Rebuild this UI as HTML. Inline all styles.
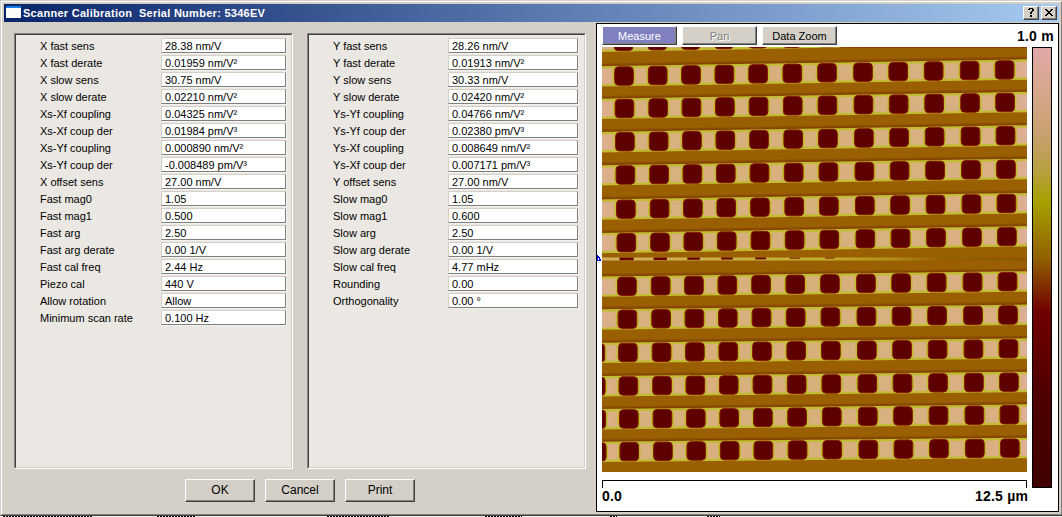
<!DOCTYPE html>
<html><head><meta charset="utf-8"><style>
*{box-sizing:border-box}
html,body{margin:0;padding:0;width:1062px;height:517px;overflow:hidden;background:#fff;font-family:"Liberation Sans",sans-serif;font-size:11px;color:#000}
.abs{position:absolute}
#win{position:absolute;left:0;top:0;width:1063px;height:516px;background:#D4D0C8;border-top:1px solid #D4D0C8;border-left:1px solid #D4D0C8;border-right:1px solid #404040;border-bottom:1px solid #404040}
#win2{position:absolute;left:1px;top:1px;width:1061px;height:514px;border-top:1px solid #fff;border-left:1px solid #fff;border-right:1px solid #808080;border-bottom:1px solid #808080}
#title{position:absolute;left:4px;top:4px;width:1055px;height:18px;background:linear-gradient(to right,#0A246A,#A6CAF0)}
#ttext{position:absolute;left:23px;top:7px;color:#fff;font-weight:bold;font-size:11px;letter-spacing:0.28px;white-space:nowrap;line-height:13px}
.cap{position:absolute;top:6px;width:16px;height:14px;background:#D4D0C8;border-top:1px solid #fff;border-left:1px solid #fff;border-right:1px solid #404040;border-bottom:1px solid #404040;box-shadow:inset -1px -1px 0 #808080}
.grp{position:absolute;top:33px;width:279px;height:436px;background:#EBE8E3;border-top:1px solid #808080;border-left:1px solid #808080;border-right:1px solid #fff;border-bottom:1px solid #fff}
.grp>div{position:absolute;left:0;top:0;right:0;bottom:0;border-top:1px solid #404040;border-left:1px solid #404040;border-right:1px solid #D4D0C8;border-bottom:1px solid #D4D0C8}
.lb{position:absolute;white-space:nowrap;line-height:15px;height:15px}
.ed{position:absolute;height:15px;background:#fff;border-top:1px solid #D4D0C8;border-left:1px solid #D4D0C8;border-right:1px solid #808080;border-bottom:1px solid #808080;padding-left:3px;line-height:15px;white-space:nowrap;box-shadow:1px 1px 0 #F4F2EE}
.btn{position:absolute;height:23px;width:70px;background:#D4D0C8;border-top:1px solid #fff;border-left:1px solid #fff;border-right:1px solid #404040;border-bottom:1px solid #404040;box-shadow:inset -1px -1px 0 #808080;text-align:center;line-height:20px;font-size:12px}
#panel{position:absolute;left:596px;top:23px;width:463px;height:489px;background:#fff;border:1px solid #000}
.tb{position:absolute;top:26px;width:75px;height:19px;background:#D4D0C8;border-top:1px solid #fff;border-left:1px solid #fff;border-right:1px solid #404040;border-bottom:1px solid #404040;box-shadow:inset -1px -1px 0 #808080;text-align:center;line-height:18px}
.sc{position:absolute;font-weight:bold;font-size:14px;letter-spacing:0.2px;line-height:16px;white-space:nowrap}

</style></head><body>
<div class="abs" style="left:0;top:516px;width:1062px;height:1px;background:#F4F2EE"></div><div class="abs" style="left:3px;top:516px;width:89px;height:1px;background:repeating-linear-gradient(to right,#000 0 2px,#fff 2px 3px)"></div><div class="abs" style="left:157px;top:516px;width:39px;height:1px;background:repeating-linear-gradient(to right,#000 0 2px,#fff 2px 3px)"></div><div class="abs" style="left:327px;top:516px;width:63px;height:1px;background:repeating-linear-gradient(to right,#000 0 2px,#fff 2px 3px)"></div><div class="abs" style="left:485px;top:516px;width:37px;height:1px;background:repeating-linear-gradient(to right,#000 0 2px,#fff 2px 3px)"></div><div class="abs" style="left:610px;top:516px;width:7px;height:1px;background:repeating-linear-gradient(to right,#000 0 2px,#fff 2px 3px)"></div><div class="abs" style="left:707px;top:516px;width:13px;height:1px;background:repeating-linear-gradient(to right,#000 0 2px,#fff 2px 3px)"></div>
<div id="win"></div><div id="win2"></div>
<div id="title"></div>
<div id="ticon" class="abs" style="left:6px;top:6px;width:15px;height:12px;background:#FDFDF8;border-top:2px solid #1A7CE6"></div>
<div id="ttext">Scanner Calibration&nbsp; Serial Number: 5346EV</div>
<div class="cap" style="left:1023px"></div>
<div class="cap" style="left:1041px"></div>
<svg class="abs" style="left:0;top:0" width="1062" height="22" viewBox="0 0 1062 22" shape-rendering="crispEdges" fill="#000"><rect x="1029" y="8" width="4" height="1"/><rect x="1028" y="9" width="2" height="1"/><rect x="1032" y="9" width="2" height="1"/><rect x="1032" y="10" width="2" height="1"/><rect x="1031" y="11" width="2" height="1"/><rect x="1030" y="12" width="2" height="1"/><rect x="1030" y="13" width="2" height="1"/><rect x="1030" y="15" width="2" height="1"/><rect x="1030" y="16" width="2" height="1"/><rect x="1045" y="9" width="1" height="1"/><rect x="1046" y="9" width="1" height="1"/><rect x="1051" y="9" width="1" height="1"/><rect x="1052" y="9" width="1" height="1"/><rect x="1046" y="10" width="1" height="1"/><rect x="1047" y="10" width="1" height="1"/><rect x="1050" y="10" width="1" height="1"/><rect x="1051" y="10" width="1" height="1"/><rect x="1047" y="11" width="1" height="1"/><rect x="1048" y="11" width="1" height="1"/><rect x="1049" y="11" width="1" height="1"/><rect x="1050" y="11" width="1" height="1"/><rect x="1048" y="12" width="1" height="1"/><rect x="1049" y="12" width="1" height="1"/><rect x="1047" y="13" width="1" height="1"/><rect x="1048" y="13" width="1" height="1"/><rect x="1049" y="13" width="1" height="1"/><rect x="1050" y="13" width="1" height="1"/><rect x="1046" y="14" width="1" height="1"/><rect x="1047" y="14" width="1" height="1"/><rect x="1050" y="14" width="1" height="1"/><rect x="1051" y="14" width="1" height="1"/><rect x="1045" y="15" width="1" height="1"/><rect x="1046" y="15" width="1" height="1"/><rect x="1051" y="15" width="1" height="1"/><rect x="1052" y="15" width="1" height="1"/></svg>
<div class="grp" style="left:14px"><div></div></div>
<div class="grp" style="left:307px"><div></div></div>
<div class="lb" style="left:40px;top:39px">X fast sens</div><div class="ed" style="left:161px;top:38px;width:125px">28.38 nm/V</div>
<div class="lb" style="left:40px;top:56px">X fast derate</div><div class="ed" style="left:161px;top:55px;width:125px">0.01959 nm/V²</div>
<div class="lb" style="left:40px;top:73px">X slow sens</div><div class="ed" style="left:161px;top:72px;width:125px">30.75 nm/V</div>
<div class="lb" style="left:40px;top:90px">X slow derate</div><div class="ed" style="left:161px;top:89px;width:125px">0.02210 nm/V²</div>
<div class="lb" style="left:40px;top:107px">Xs-Xf coupling</div><div class="ed" style="left:161px;top:106px;width:125px">0.04325 nm/V²</div>
<div class="lb" style="left:40px;top:124px">Xs-Xf coup der</div><div class="ed" style="left:161px;top:123px;width:125px">0.01984 pm/V³</div>
<div class="lb" style="left:40px;top:141px">Xs-Yf coupling</div><div class="ed" style="left:161px;top:140px;width:125px">0.000890 nm/V²</div>
<div class="lb" style="left:40px;top:158px">Xs-Yf coup der</div><div class="ed" style="left:161px;top:157px;width:125px">-0.008489 pm/V³</div>
<div class="lb" style="left:40px;top:175px">X offset sens</div><div class="ed" style="left:161px;top:174px;width:125px">27.00 nm/V</div>
<div class="lb" style="left:40px;top:192px">Fast mag0</div><div class="ed" style="left:161px;top:191px;width:125px">1.05</div>
<div class="lb" style="left:40px;top:209px">Fast mag1</div><div class="ed" style="left:161px;top:208px;width:125px">0.500</div>
<div class="lb" style="left:40px;top:226px">Fast arg</div><div class="ed" style="left:161px;top:225px;width:125px">2.50</div>
<div class="lb" style="left:40px;top:243px">Fast arg derate</div><div class="ed" style="left:161px;top:242px;width:125px">0.00 1/V</div>
<div class="lb" style="left:40px;top:260px">Fast cal freq</div><div class="ed" style="left:161px;top:259px;width:125px">2.44 Hz</div>
<div class="lb" style="left:40px;top:277px">Piezo cal</div><div class="ed" style="left:161px;top:276px;width:125px">440 V</div>
<div class="lb" style="left:40px;top:294px">Allow rotation</div><div class="ed" style="left:161px;top:293px;width:125px">Allow</div>
<div class="lb" style="left:40px;top:311px">Minimum scan rate</div><div class="ed" style="left:161px;top:310px;width:125px">0.100 Hz</div>
<div class="lb" style="left:333px;top:39px">Y fast sens</div><div class="ed" style="left:448px;top:38px;width:130px">28.26 nm/V</div>
<div class="lb" style="left:333px;top:56px">Y fast derate</div><div class="ed" style="left:448px;top:55px;width:130px">0.01913 nm/V²</div>
<div class="lb" style="left:333px;top:73px">Y slow sens</div><div class="ed" style="left:448px;top:72px;width:130px">30.33 nm/V</div>
<div class="lb" style="left:333px;top:90px">Y slow derate</div><div class="ed" style="left:448px;top:89px;width:130px">0.02420 nm/V²</div>
<div class="lb" style="left:333px;top:107px">Ys-Yf coupling</div><div class="ed" style="left:448px;top:106px;width:130px">0.04766 nm/V²</div>
<div class="lb" style="left:333px;top:124px">Ys-Yf coup der</div><div class="ed" style="left:448px;top:123px;width:130px">0.02380 pm/V³</div>
<div class="lb" style="left:333px;top:141px">Ys-Xf coupling</div><div class="ed" style="left:448px;top:140px;width:130px">0.008649 nm/V²</div>
<div class="lb" style="left:333px;top:158px">Ys-Xf coup der</div><div class="ed" style="left:448px;top:157px;width:130px">0.007171 pm/V³</div>
<div class="lb" style="left:333px;top:175px">Y offset sens</div><div class="ed" style="left:448px;top:174px;width:130px">27.00 nm/V</div>
<div class="lb" style="left:333px;top:192px">Slow mag0</div><div class="ed" style="left:448px;top:191px;width:130px">1.05</div>
<div class="lb" style="left:333px;top:209px">Slow mag1</div><div class="ed" style="left:448px;top:208px;width:130px">0.600</div>
<div class="lb" style="left:333px;top:226px">Slow arg</div><div class="ed" style="left:448px;top:225px;width:130px">2.50</div>
<div class="lb" style="left:333px;top:243px">Slow arg derate</div><div class="ed" style="left:448px;top:242px;width:130px">0.00 1/V</div>
<div class="lb" style="left:333px;top:260px">Slow cal freq</div><div class="ed" style="left:448px;top:259px;width:130px">4.77 mHz</div>
<div class="lb" style="left:333px;top:277px">Rounding</div><div class="ed" style="left:448px;top:276px;width:130px">0.00</div>
<div class="lb" style="left:333px;top:294px">Orthogonality</div><div class="ed" style="left:448px;top:293px;width:130px">0.00 °</div>
<div class="btn" style="left:185px;top:479px">OK</div>
<div class="btn" style="left:265px;top:479px">Cancel</div>
<div class="btn" style="left:345px;top:479px">Print</div>
<div id="panel"></div>
<div class="tb" style="left:602px;background:#8080C0;color:#fff">Measure</div>
<div class="tb" style="left:682px;color:#808080;text-shadow:1px 1px 0 #fff">Pan</div>
<div class="tb" style="left:762px">Data Zoom</div>
<svg width="425" height="425" viewBox="602 47 425 425" style="position:absolute;left:602px;top:47px;display:block">
<defs><linearGradient id="lg" x1="0" x2="1" y1="0" y2="0"><stop offset="0" stop-color="#E0AE9A"/><stop offset="0.04" stop-color="#D9B080"/><stop offset="0.5" stop-color="#D8B07C"/><stop offset="0.95" stop-color="#DAB084"/><stop offset="1" stop-color="#E0AE9C"/></linearGradient><filter id="bl" x="-5%" y="-5%" width="110%" height="110%"><feGaussianBlur stdDeviation="0.75"/></filter></defs>
<g filter="url(#bl)">
<rect x="597" y="42" width="435" height="435" fill="#9A5E00"/>
<polygon points="597,29.03 1032,20.77 1032,23.77 597,32.03" fill="#8E5000" />
<polygon points="597,30.23 1032,21.97 1032,23.77 597,32.03" fill="#844400" />
<polygon points="597,31.73 1032,23.47 1032,43.87 597,52.13" fill="#C2BC30" />
<polygon points="597,34.03 1032,25.77 1032,41.57 597,49.83" fill="url(#lg)" />
<rect x="612.22" y="32.73" width="22.6" height="17.4" rx="3.8" fill="#C0BC2C"/>
<rect x="614.22" y="32.23" width="18.6" height="18.4" rx="3.8" fill="#5C0000" stroke="#861400" stroke-width="1"/>
<rect x="645.92" y="32.09" width="22.6" height="17.4" rx="3.8" fill="#C0BC2C"/>
<rect x="647.92" y="31.59" width="18.6" height="18.4" rx="3.8" fill="#5C0000" stroke="#861400" stroke-width="1"/>
<rect x="679.22" y="31.46" width="22.6" height="17.4" rx="3.8" fill="#C0BC2C"/>
<rect x="681.22" y="30.96" width="18.6" height="18.4" rx="3.8" fill="#5C0000" stroke="#861400" stroke-width="1"/>
<rect x="712.62" y="30.82" width="22.6" height="17.4" rx="3.8" fill="#C0BC2C"/>
<rect x="714.62" y="30.32" width="18.6" height="18.4" rx="3.8" fill="#5C0000" stroke="#861400" stroke-width="1"/>
<rect x="746.32" y="30.18" width="22.6" height="17.4" rx="3.8" fill="#C0BC2C"/>
<rect x="748.32" y="29.68" width="18.6" height="18.4" rx="3.8" fill="#5C0000" stroke="#861400" stroke-width="1"/>
<rect x="780.52" y="29.53" width="22.6" height="17.4" rx="3.8" fill="#C0BC2C"/>
<rect x="782.52" y="29.03" width="18.6" height="18.4" rx="3.8" fill="#5C0000" stroke="#861400" stroke-width="1"/>
<rect x="815.22" y="28.87" width="22.6" height="17.4" rx="3.8" fill="#C0BC2C"/>
<rect x="817.22" y="28.37" width="18.6" height="18.4" rx="3.8" fill="#5C0000" stroke="#861400" stroke-width="1"/>
<rect x="851.22" y="28.19" width="22.6" height="17.4" rx="3.8" fill="#C0BC2C"/>
<rect x="853.22" y="27.69" width="18.6" height="18.4" rx="3.8" fill="#5C0000" stroke="#861400" stroke-width="1"/>
<rect x="886.42" y="27.52" width="22.6" height="17.4" rx="3.8" fill="#C0BC2C"/>
<rect x="888.42" y="27.02" width="18.6" height="18.4" rx="3.8" fill="#5C0000" stroke="#861400" stroke-width="1"/>
<rect x="921.92" y="26.84" width="22.6" height="17.4" rx="3.8" fill="#C0BC2C"/>
<rect x="923.92" y="26.34" width="18.6" height="18.4" rx="3.8" fill="#5C0000" stroke="#861400" stroke-width="1"/>
<rect x="957.82" y="26.16" width="22.6" height="17.4" rx="3.8" fill="#C0BC2C"/>
<rect x="959.82" y="25.66" width="18.6" height="18.4" rx="3.8" fill="#5C0000" stroke="#861400" stroke-width="1"/>
<rect x="992.82" y="25.50" width="22.6" height="17.4" rx="3.8" fill="#C0BC2C"/>
<rect x="994.82" y="25.00" width="18.6" height="18.4" rx="3.8" fill="#5C0000" stroke="#861400" stroke-width="1"/>
<rect x="1028.22" y="24.82" width="22.6" height="17.4" rx="3.8" fill="#C0BC2C"/>
<rect x="1030.22" y="24.32" width="18.6" height="18.4" rx="3.8" fill="#5C0000" stroke="#861400" stroke-width="1"/>
<polygon points="597,63.55 1032,56.59 1032,59.59 597,66.55" fill="#8E5000" />
<polygon points="597,64.75 1032,57.79 1032,59.59 597,66.55" fill="#844400" />
<polygon points="597,66.25 1032,59.29 1032,79.69 597,86.65" fill="#C2BC30" />
<polygon points="597,68.55 1032,61.59 1032,77.39 597,84.35" fill="url(#lg)" />
<rect x="612.70" y="67.32" width="22.6" height="17.4" rx="3.8" fill="#C0BC2C"/>
<rect x="614.70" y="66.82" width="18.6" height="18.4" rx="3.8" fill="#5C0000" stroke="#861400" stroke-width="1"/>
<rect x="646.40" y="66.78" width="22.6" height="17.4" rx="3.8" fill="#C0BC2C"/>
<rect x="648.40" y="66.28" width="18.6" height="18.4" rx="3.8" fill="#5C0000" stroke="#861400" stroke-width="1"/>
<rect x="679.70" y="66.24" width="22.6" height="17.4" rx="3.8" fill="#C0BC2C"/>
<rect x="681.70" y="65.74" width="18.6" height="18.4" rx="3.8" fill="#5C0000" stroke="#861400" stroke-width="1"/>
<rect x="713.10" y="65.71" width="22.6" height="17.4" rx="3.8" fill="#C0BC2C"/>
<rect x="715.10" y="65.21" width="18.6" height="18.4" rx="3.8" fill="#5C0000" stroke="#861400" stroke-width="1"/>
<rect x="746.80" y="65.17" width="22.6" height="17.4" rx="3.8" fill="#C0BC2C"/>
<rect x="748.80" y="64.67" width="18.6" height="18.4" rx="3.8" fill="#5C0000" stroke="#861400" stroke-width="1"/>
<rect x="781.00" y="64.62" width="22.6" height="17.4" rx="3.8" fill="#C0BC2C"/>
<rect x="783.00" y="64.12" width="18.6" height="18.4" rx="3.8" fill="#5C0000" stroke="#861400" stroke-width="1"/>
<rect x="815.70" y="64.07" width="22.6" height="17.4" rx="3.8" fill="#C0BC2C"/>
<rect x="817.70" y="63.57" width="18.6" height="18.4" rx="3.8" fill="#5C0000" stroke="#861400" stroke-width="1"/>
<rect x="851.70" y="63.49" width="22.6" height="17.4" rx="3.8" fill="#C0BC2C"/>
<rect x="853.70" y="62.99" width="18.6" height="18.4" rx="3.8" fill="#5C0000" stroke="#861400" stroke-width="1"/>
<rect x="886.90" y="62.93" width="22.6" height="17.4" rx="3.8" fill="#C0BC2C"/>
<rect x="888.90" y="62.43" width="18.6" height="18.4" rx="3.8" fill="#5C0000" stroke="#861400" stroke-width="1"/>
<rect x="922.40" y="62.36" width="22.6" height="17.4" rx="3.8" fill="#C0BC2C"/>
<rect x="924.40" y="61.86" width="18.6" height="18.4" rx="3.8" fill="#5C0000" stroke="#861400" stroke-width="1"/>
<rect x="958.30" y="61.79" width="22.6" height="17.4" rx="3.8" fill="#C0BC2C"/>
<rect x="960.30" y="61.29" width="18.6" height="18.4" rx="3.8" fill="#5C0000" stroke="#861400" stroke-width="1"/>
<rect x="993.30" y="61.23" width="22.6" height="17.4" rx="3.8" fill="#C0BC2C"/>
<rect x="995.30" y="60.73" width="18.6" height="18.4" rx="3.8" fill="#5C0000" stroke="#861400" stroke-width="1"/>
<rect x="1028.70" y="60.66" width="22.6" height="17.4" rx="3.8" fill="#C0BC2C"/>
<rect x="1030.70" y="60.16" width="18.6" height="18.4" rx="3.8" fill="#5C0000" stroke="#861400" stroke-width="1"/>
<polygon points="597,96.05 1032,89.09 1032,92.09 597,99.05" fill="#8E5000" />
<polygon points="597,97.25 1032,90.29 1032,92.09 597,99.05" fill="#844400" />
<polygon points="597,98.75 1032,91.79 1032,112.19 597,119.15" fill="#C2BC30" />
<polygon points="597,101.05 1032,94.09 1032,109.89 597,116.85" fill="url(#lg)" />
<rect x="613.16" y="99.81" width="22.6" height="17.4" rx="3.8" fill="#C0BC2C"/>
<rect x="615.16" y="99.31" width="18.6" height="18.4" rx="3.8" fill="#5C0000" stroke="#861400" stroke-width="1"/>
<rect x="646.86" y="99.27" width="22.6" height="17.4" rx="3.8" fill="#C0BC2C"/>
<rect x="648.86" y="98.77" width="18.6" height="18.4" rx="3.8" fill="#5C0000" stroke="#861400" stroke-width="1"/>
<rect x="680.16" y="98.74" width="22.6" height="17.4" rx="3.8" fill="#C0BC2C"/>
<rect x="682.16" y="98.24" width="18.6" height="18.4" rx="3.8" fill="#5C0000" stroke="#861400" stroke-width="1"/>
<rect x="713.56" y="98.20" width="22.6" height="17.4" rx="3.8" fill="#C0BC2C"/>
<rect x="715.56" y="97.70" width="18.6" height="18.4" rx="3.8" fill="#5C0000" stroke="#861400" stroke-width="1"/>
<rect x="747.26" y="97.66" width="22.6" height="17.4" rx="3.8" fill="#C0BC2C"/>
<rect x="749.26" y="97.16" width="18.6" height="18.4" rx="3.8" fill="#5C0000" stroke="#861400" stroke-width="1"/>
<rect x="781.46" y="97.12" width="22.6" height="17.4" rx="3.8" fill="#C0BC2C"/>
<rect x="783.46" y="96.62" width="18.6" height="18.4" rx="3.8" fill="#5C0000" stroke="#861400" stroke-width="1"/>
<rect x="816.16" y="96.56" width="22.6" height="17.4" rx="3.8" fill="#C0BC2C"/>
<rect x="818.16" y="96.06" width="18.6" height="18.4" rx="3.8" fill="#5C0000" stroke="#861400" stroke-width="1"/>
<rect x="852.16" y="95.98" width="22.6" height="17.4" rx="3.8" fill="#C0BC2C"/>
<rect x="854.16" y="95.48" width="18.6" height="18.4" rx="3.8" fill="#5C0000" stroke="#861400" stroke-width="1"/>
<rect x="887.36" y="95.42" width="22.6" height="17.4" rx="3.8" fill="#C0BC2C"/>
<rect x="889.36" y="94.92" width="18.6" height="18.4" rx="3.8" fill="#5C0000" stroke="#861400" stroke-width="1"/>
<rect x="922.86" y="94.85" width="22.6" height="17.4" rx="3.8" fill="#C0BC2C"/>
<rect x="924.86" y="94.35" width="18.6" height="18.4" rx="3.8" fill="#5C0000" stroke="#861400" stroke-width="1"/>
<rect x="958.76" y="94.28" width="22.6" height="17.4" rx="3.8" fill="#C0BC2C"/>
<rect x="960.76" y="93.78" width="18.6" height="18.4" rx="3.8" fill="#5C0000" stroke="#861400" stroke-width="1"/>
<rect x="993.76" y="93.72" width="22.6" height="17.4" rx="3.8" fill="#C0BC2C"/>
<rect x="995.76" y="93.22" width="18.6" height="18.4" rx="3.8" fill="#5C0000" stroke="#861400" stroke-width="1"/>
<rect x="1029.15" y="93.15" width="22.6" height="17.4" rx="3.8" fill="#C0BC2C"/>
<rect x="1031.15" y="92.65" width="18.6" height="18.4" rx="3.8" fill="#5C0000" stroke="#861400" stroke-width="1"/>
<polygon points="597,129.35 1032,122.39 1032,125.39 597,132.35" fill="#8E5000" />
<polygon points="597,130.55 1032,123.59 1032,125.39 597,132.35" fill="#844400" />
<polygon points="597,132.05 1032,125.09 1032,145.49 597,152.45" fill="#C2BC30" />
<polygon points="597,134.35 1032,127.39 1032,143.19 597,150.15" fill="url(#lg)" />
<rect x="613.62" y="133.10" width="22.6" height="17.4" rx="3.8" fill="#C0BC2C"/>
<rect x="615.62" y="132.60" width="18.6" height="18.4" rx="3.8" fill="#5C0000" stroke="#861400" stroke-width="1"/>
<rect x="647.32" y="132.56" width="22.6" height="17.4" rx="3.8" fill="#C0BC2C"/>
<rect x="649.32" y="132.06" width="18.6" height="18.4" rx="3.8" fill="#5C0000" stroke="#861400" stroke-width="1"/>
<rect x="680.62" y="132.03" width="22.6" height="17.4" rx="3.8" fill="#C0BC2C"/>
<rect x="682.62" y="131.53" width="18.6" height="18.4" rx="3.8" fill="#5C0000" stroke="#861400" stroke-width="1"/>
<rect x="714.02" y="131.49" width="22.6" height="17.4" rx="3.8" fill="#C0BC2C"/>
<rect x="716.02" y="130.99" width="18.6" height="18.4" rx="3.8" fill="#5C0000" stroke="#861400" stroke-width="1"/>
<rect x="747.72" y="130.96" width="22.6" height="17.4" rx="3.8" fill="#C0BC2C"/>
<rect x="749.72" y="130.46" width="18.6" height="18.4" rx="3.8" fill="#5C0000" stroke="#861400" stroke-width="1"/>
<rect x="781.92" y="130.41" width="22.6" height="17.4" rx="3.8" fill="#C0BC2C"/>
<rect x="783.92" y="129.91" width="18.6" height="18.4" rx="3.8" fill="#5C0000" stroke="#861400" stroke-width="1"/>
<rect x="816.62" y="129.85" width="22.6" height="17.4" rx="3.8" fill="#C0BC2C"/>
<rect x="818.62" y="129.35" width="18.6" height="18.4" rx="3.8" fill="#5C0000" stroke="#861400" stroke-width="1"/>
<rect x="852.62" y="129.28" width="22.6" height="17.4" rx="3.8" fill="#C0BC2C"/>
<rect x="854.62" y="128.78" width="18.6" height="18.4" rx="3.8" fill="#5C0000" stroke="#861400" stroke-width="1"/>
<rect x="887.82" y="128.71" width="22.6" height="17.4" rx="3.8" fill="#C0BC2C"/>
<rect x="889.82" y="128.21" width="18.6" height="18.4" rx="3.8" fill="#5C0000" stroke="#861400" stroke-width="1"/>
<rect x="923.32" y="128.15" width="22.6" height="17.4" rx="3.8" fill="#C0BC2C"/>
<rect x="925.32" y="127.65" width="18.6" height="18.4" rx="3.8" fill="#5C0000" stroke="#861400" stroke-width="1"/>
<rect x="959.22" y="127.57" width="22.6" height="17.4" rx="3.8" fill="#C0BC2C"/>
<rect x="961.22" y="127.07" width="18.6" height="18.4" rx="3.8" fill="#5C0000" stroke="#861400" stroke-width="1"/>
<rect x="994.22" y="127.01" width="22.6" height="17.4" rx="3.8" fill="#C0BC2C"/>
<rect x="996.22" y="126.51" width="18.6" height="18.4" rx="3.8" fill="#5C0000" stroke="#861400" stroke-width="1"/>
<rect x="1029.62" y="126.45" width="22.6" height="17.4" rx="3.8" fill="#C0BC2C"/>
<rect x="1031.62" y="125.95" width="18.6" height="18.4" rx="3.8" fill="#5C0000" stroke="#861400" stroke-width="1"/>
<polygon points="597,162.52 1032,156.00 1032,159.00 597,165.52" fill="#8E5000" />
<polygon points="597,163.72 1032,157.19 1032,159.00 597,165.52" fill="#844400" />
<polygon points="597,165.22 1032,158.69 1032,179.10 597,185.62" fill="#C2BC30" />
<polygon points="597,167.52 1032,161.00 1032,176.80 597,183.32" fill="url(#lg)" />
<rect x="614.09" y="166.29" width="22.6" height="17.4" rx="3.8" fill="#C0BC2C"/>
<rect x="616.09" y="165.79" width="18.6" height="18.4" rx="3.8" fill="#5C0000" stroke="#861400" stroke-width="1"/>
<rect x="647.79" y="165.79" width="22.6" height="17.4" rx="3.8" fill="#C0BC2C"/>
<rect x="649.79" y="165.29" width="18.6" height="18.4" rx="3.8" fill="#5C0000" stroke="#861400" stroke-width="1"/>
<rect x="681.09" y="165.29" width="22.6" height="17.4" rx="3.8" fill="#C0BC2C"/>
<rect x="683.09" y="164.79" width="18.6" height="18.4" rx="3.8" fill="#5C0000" stroke="#861400" stroke-width="1"/>
<rect x="714.49" y="164.79" width="22.6" height="17.4" rx="3.8" fill="#C0BC2C"/>
<rect x="716.49" y="164.29" width="18.6" height="18.4" rx="3.8" fill="#5C0000" stroke="#861400" stroke-width="1"/>
<rect x="748.19" y="164.28" width="22.6" height="17.4" rx="3.8" fill="#C0BC2C"/>
<rect x="750.19" y="163.78" width="18.6" height="18.4" rx="3.8" fill="#5C0000" stroke="#861400" stroke-width="1"/>
<rect x="782.39" y="163.77" width="22.6" height="17.4" rx="3.8" fill="#C0BC2C"/>
<rect x="784.39" y="163.27" width="18.6" height="18.4" rx="3.8" fill="#5C0000" stroke="#861400" stroke-width="1"/>
<rect x="817.09" y="163.25" width="22.6" height="17.4" rx="3.8" fill="#C0BC2C"/>
<rect x="819.09" y="162.75" width="18.6" height="18.4" rx="3.8" fill="#5C0000" stroke="#861400" stroke-width="1"/>
<rect x="853.09" y="162.71" width="22.6" height="17.4" rx="3.8" fill="#C0BC2C"/>
<rect x="855.09" y="162.21" width="18.6" height="18.4" rx="3.8" fill="#5C0000" stroke="#861400" stroke-width="1"/>
<rect x="888.29" y="162.18" width="22.6" height="17.4" rx="3.8" fill="#C0BC2C"/>
<rect x="890.29" y="161.68" width="18.6" height="18.4" rx="3.8" fill="#5C0000" stroke="#861400" stroke-width="1"/>
<rect x="923.79" y="161.65" width="22.6" height="17.4" rx="3.8" fill="#C0BC2C"/>
<rect x="925.79" y="161.15" width="18.6" height="18.4" rx="3.8" fill="#5C0000" stroke="#861400" stroke-width="1"/>
<rect x="959.69" y="161.11" width="22.6" height="17.4" rx="3.8" fill="#C0BC2C"/>
<rect x="961.69" y="160.61" width="18.6" height="18.4" rx="3.8" fill="#5C0000" stroke="#861400" stroke-width="1"/>
<rect x="994.69" y="160.59" width="22.6" height="17.4" rx="3.8" fill="#C0BC2C"/>
<rect x="996.69" y="160.09" width="18.6" height="18.4" rx="3.8" fill="#5C0000" stroke="#861400" stroke-width="1"/>
<rect x="1030.09" y="160.05" width="22.6" height="17.4" rx="3.8" fill="#C0BC2C"/>
<rect x="1032.09" y="159.55" width="18.6" height="18.4" rx="3.8" fill="#5C0000" stroke="#861400" stroke-width="1"/>
<polygon points="597,196.72 1032,190.19 1032,193.19 597,199.72" fill="#8E5000" />
<polygon points="597,197.92 1032,191.39 1032,193.19 597,199.72" fill="#844400" />
<polygon points="597,199.42 1032,192.89 1032,213.30 597,219.82" fill="#C2BC30" />
<polygon points="597,201.72 1032,195.19 1032,211.00 597,217.52" fill="url(#lg)" />
<rect x="614.56" y="200.49" width="22.6" height="17.4" rx="3.8" fill="#C0BC2C"/>
<rect x="616.56" y="199.99" width="18.6" height="18.4" rx="3.8" fill="#5C0000" stroke="#861400" stroke-width="1"/>
<rect x="648.26" y="199.98" width="22.6" height="17.4" rx="3.8" fill="#C0BC2C"/>
<rect x="650.26" y="199.48" width="18.6" height="18.4" rx="3.8" fill="#5C0000" stroke="#861400" stroke-width="1"/>
<rect x="681.56" y="199.48" width="22.6" height="17.4" rx="3.8" fill="#C0BC2C"/>
<rect x="683.56" y="198.98" width="18.6" height="18.4" rx="3.8" fill="#5C0000" stroke="#861400" stroke-width="1"/>
<rect x="714.96" y="198.98" width="22.6" height="17.4" rx="3.8" fill="#C0BC2C"/>
<rect x="716.96" y="198.48" width="18.6" height="18.4" rx="3.8" fill="#5C0000" stroke="#861400" stroke-width="1"/>
<rect x="748.66" y="198.48" width="22.6" height="17.4" rx="3.8" fill="#C0BC2C"/>
<rect x="750.66" y="197.98" width="18.6" height="18.4" rx="3.8" fill="#5C0000" stroke="#861400" stroke-width="1"/>
<rect x="782.86" y="197.96" width="22.6" height="17.4" rx="3.8" fill="#C0BC2C"/>
<rect x="784.86" y="197.46" width="18.6" height="18.4" rx="3.8" fill="#5C0000" stroke="#861400" stroke-width="1"/>
<rect x="817.56" y="197.44" width="22.6" height="17.4" rx="3.8" fill="#C0BC2C"/>
<rect x="819.56" y="196.94" width="18.6" height="18.4" rx="3.8" fill="#5C0000" stroke="#861400" stroke-width="1"/>
<rect x="853.56" y="196.90" width="22.6" height="17.4" rx="3.8" fill="#C0BC2C"/>
<rect x="855.56" y="196.40" width="18.6" height="18.4" rx="3.8" fill="#5C0000" stroke="#861400" stroke-width="1"/>
<rect x="888.76" y="196.37" width="22.6" height="17.4" rx="3.8" fill="#C0BC2C"/>
<rect x="890.76" y="195.87" width="18.6" height="18.4" rx="3.8" fill="#5C0000" stroke="#861400" stroke-width="1"/>
<rect x="924.26" y="195.84" width="22.6" height="17.4" rx="3.8" fill="#C0BC2C"/>
<rect x="926.26" y="195.34" width="18.6" height="18.4" rx="3.8" fill="#5C0000" stroke="#861400" stroke-width="1"/>
<rect x="960.16" y="195.30" width="22.6" height="17.4" rx="3.8" fill="#C0BC2C"/>
<rect x="962.16" y="194.80" width="18.6" height="18.4" rx="3.8" fill="#5C0000" stroke="#861400" stroke-width="1"/>
<rect x="995.16" y="194.78" width="22.6" height="17.4" rx="3.8" fill="#C0BC2C"/>
<rect x="997.16" y="194.28" width="18.6" height="18.4" rx="3.8" fill="#5C0000" stroke="#861400" stroke-width="1"/>
<rect x="1030.56" y="194.25" width="22.6" height="17.4" rx="3.8" fill="#C0BC2C"/>
<rect x="1032.56" y="193.75" width="18.6" height="18.4" rx="3.8" fill="#5C0000" stroke="#861400" stroke-width="1"/>
<polygon points="597,230.25 1032,223.29 1032,226.29 597,233.25" fill="#8E5000" />
<polygon points="597,231.45 1032,224.49 1032,226.29 597,233.25" fill="#844400" />
<polygon points="597,232.95 1032,225.99 1032,246.39 597,253.35" fill="#C2BC30" />
<polygon points="597,235.25 1032,228.29 1032,244.09 597,251.05" fill="url(#lg)" />
<rect x="615.03" y="233.98" width="22.6" height="17.4" rx="3.8" fill="#C0BC2C"/>
<rect x="617.03" y="233.48" width="18.6" height="18.4" rx="3.8" fill="#5C0000" stroke="#861400" stroke-width="1"/>
<rect x="648.73" y="233.44" width="22.6" height="17.4" rx="3.8" fill="#C0BC2C"/>
<rect x="650.73" y="232.94" width="18.6" height="18.4" rx="3.8" fill="#5C0000" stroke="#861400" stroke-width="1"/>
<rect x="682.03" y="232.91" width="22.6" height="17.4" rx="3.8" fill="#C0BC2C"/>
<rect x="684.03" y="232.41" width="18.6" height="18.4" rx="3.8" fill="#5C0000" stroke="#861400" stroke-width="1"/>
<rect x="715.43" y="232.37" width="22.6" height="17.4" rx="3.8" fill="#C0BC2C"/>
<rect x="717.43" y="231.87" width="18.6" height="18.4" rx="3.8" fill="#5C0000" stroke="#861400" stroke-width="1"/>
<rect x="749.13" y="231.83" width="22.6" height="17.4" rx="3.8" fill="#C0BC2C"/>
<rect x="751.13" y="231.33" width="18.6" height="18.4" rx="3.8" fill="#5C0000" stroke="#861400" stroke-width="1"/>
<rect x="783.33" y="231.29" width="22.6" height="17.4" rx="3.8" fill="#C0BC2C"/>
<rect x="785.33" y="230.79" width="18.6" height="18.4" rx="3.8" fill="#5C0000" stroke="#861400" stroke-width="1"/>
<rect x="818.03" y="230.73" width="22.6" height="17.4" rx="3.8" fill="#C0BC2C"/>
<rect x="820.03" y="230.23" width="18.6" height="18.4" rx="3.8" fill="#5C0000" stroke="#861400" stroke-width="1"/>
<rect x="854.03" y="230.15" width="22.6" height="17.4" rx="3.8" fill="#C0BC2C"/>
<rect x="856.03" y="229.65" width="18.6" height="18.4" rx="3.8" fill="#5C0000" stroke="#861400" stroke-width="1"/>
<rect x="889.23" y="229.59" width="22.6" height="17.4" rx="3.8" fill="#C0BC2C"/>
<rect x="891.23" y="229.09" width="18.6" height="18.4" rx="3.8" fill="#5C0000" stroke="#861400" stroke-width="1"/>
<rect x="924.73" y="229.02" width="22.6" height="17.4" rx="3.8" fill="#C0BC2C"/>
<rect x="926.73" y="228.52" width="18.6" height="18.4" rx="3.8" fill="#5C0000" stroke="#861400" stroke-width="1"/>
<rect x="960.63" y="228.45" width="22.6" height="17.4" rx="3.8" fill="#C0BC2C"/>
<rect x="962.63" y="227.95" width="18.6" height="18.4" rx="3.8" fill="#5C0000" stroke="#861400" stroke-width="1"/>
<rect x="995.63" y="227.89" width="22.6" height="17.4" rx="3.8" fill="#C0BC2C"/>
<rect x="997.63" y="227.39" width="18.6" height="18.4" rx="3.8" fill="#5C0000" stroke="#861400" stroke-width="1"/>
<rect x="1031.03" y="227.32" width="22.6" height="17.4" rx="3.8" fill="#C0BC2C"/>
<rect x="1033.03" y="226.82" width="18.6" height="18.4" rx="3.8" fill="#5C0000" stroke="#861400" stroke-width="1"/>
<polygon points="597,273.74 1032,268.52 1032,271.52 597,276.74" fill="#8E5000" />
<polygon points="597,274.94 1032,269.72 1032,271.52 597,276.74" fill="#844400" />
<polygon points="597,276.44 1032,271.22 1032,291.62 597,296.84" fill="#C2BC30" />
<polygon points="597,278.74 1032,273.52 1032,289.32 597,294.54" fill="url(#lg)" />
<rect x="615.64" y="277.58" width="22.6" height="17.4" rx="3.8" fill="#C0BC2C"/>
<rect x="617.64" y="277.08" width="18.6" height="18.4" rx="3.8" fill="#5C0000" stroke="#861400" stroke-width="1"/>
<rect x="649.34" y="277.17" width="22.6" height="17.4" rx="3.8" fill="#C0BC2C"/>
<rect x="651.34" y="276.67" width="18.6" height="18.4" rx="3.8" fill="#5C0000" stroke="#861400" stroke-width="1"/>
<rect x="682.64" y="276.77" width="22.6" height="17.4" rx="3.8" fill="#C0BC2C"/>
<rect x="684.64" y="276.27" width="18.6" height="18.4" rx="3.8" fill="#5C0000" stroke="#861400" stroke-width="1"/>
<rect x="716.04" y="276.37" width="22.6" height="17.4" rx="3.8" fill="#C0BC2C"/>
<rect x="718.04" y="275.87" width="18.6" height="18.4" rx="3.8" fill="#5C0000" stroke="#861400" stroke-width="1"/>
<rect x="749.74" y="275.97" width="22.6" height="17.4" rx="3.8" fill="#C0BC2C"/>
<rect x="751.74" y="275.47" width="18.6" height="18.4" rx="3.8" fill="#5C0000" stroke="#861400" stroke-width="1"/>
<rect x="783.94" y="275.56" width="22.6" height="17.4" rx="3.8" fill="#C0BC2C"/>
<rect x="785.94" y="275.06" width="18.6" height="18.4" rx="3.8" fill="#5C0000" stroke="#861400" stroke-width="1"/>
<rect x="818.64" y="275.14" width="22.6" height="17.4" rx="3.8" fill="#C0BC2C"/>
<rect x="820.64" y="274.64" width="18.6" height="18.4" rx="3.8" fill="#5C0000" stroke="#861400" stroke-width="1"/>
<rect x="854.64" y="274.71" width="22.6" height="17.4" rx="3.8" fill="#C0BC2C"/>
<rect x="856.64" y="274.21" width="18.6" height="18.4" rx="3.8" fill="#5C0000" stroke="#861400" stroke-width="1"/>
<rect x="889.84" y="274.29" width="22.6" height="17.4" rx="3.8" fill="#C0BC2C"/>
<rect x="891.84" y="273.79" width="18.6" height="18.4" rx="3.8" fill="#5C0000" stroke="#861400" stroke-width="1"/>
<rect x="925.34" y="273.86" width="22.6" height="17.4" rx="3.8" fill="#C0BC2C"/>
<rect x="927.34" y="273.36" width="18.6" height="18.4" rx="3.8" fill="#5C0000" stroke="#861400" stroke-width="1"/>
<rect x="961.24" y="273.43" width="22.6" height="17.4" rx="3.8" fill="#C0BC2C"/>
<rect x="963.24" y="272.93" width="18.6" height="18.4" rx="3.8" fill="#5C0000" stroke="#861400" stroke-width="1"/>
<rect x="996.24" y="273.01" width="22.6" height="17.4" rx="3.8" fill="#C0BC2C"/>
<rect x="998.24" y="272.51" width="18.6" height="18.4" rx="3.8" fill="#5C0000" stroke="#861400" stroke-width="1"/>
<rect x="1031.64" y="272.58" width="22.6" height="17.4" rx="3.8" fill="#C0BC2C"/>
<rect x="1033.64" y="272.08" width="18.6" height="18.4" rx="3.8" fill="#5C0000" stroke="#861400" stroke-width="1"/>
<polygon points="597,306.61 1032,301.82 1032,304.82 597,309.61" fill="#8E5000" />
<polygon points="597,307.81 1032,303.02 1032,304.82 597,309.61" fill="#844400" />
<polygon points="597,309.31 1032,304.52 1032,324.92 597,329.71" fill="#C2BC30" />
<polygon points="597,311.61 1032,306.82 1032,322.62 597,327.41" fill="url(#lg)" />
<rect x="616.10" y="310.47" width="22.6" height="17.4" rx="3.8" fill="#C0BC2C"/>
<rect x="618.10" y="309.97" width="18.6" height="18.4" rx="3.8" fill="#5C0000" stroke="#861400" stroke-width="1"/>
<rect x="649.80" y="310.10" width="22.6" height="17.4" rx="3.8" fill="#C0BC2C"/>
<rect x="651.80" y="309.60" width="18.6" height="18.4" rx="3.8" fill="#5C0000" stroke="#861400" stroke-width="1"/>
<rect x="683.10" y="309.74" width="22.6" height="17.4" rx="3.8" fill="#C0BC2C"/>
<rect x="685.10" y="309.24" width="18.6" height="18.4" rx="3.8" fill="#5C0000" stroke="#861400" stroke-width="1"/>
<rect x="716.50" y="309.37" width="22.6" height="17.4" rx="3.8" fill="#C0BC2C"/>
<rect x="718.50" y="308.87" width="18.6" height="18.4" rx="3.8" fill="#5C0000" stroke="#861400" stroke-width="1"/>
<rect x="750.20" y="309.00" width="22.6" height="17.4" rx="3.8" fill="#C0BC2C"/>
<rect x="752.20" y="308.50" width="18.6" height="18.4" rx="3.8" fill="#5C0000" stroke="#861400" stroke-width="1"/>
<rect x="784.40" y="308.62" width="22.6" height="17.4" rx="3.8" fill="#C0BC2C"/>
<rect x="786.40" y="308.12" width="18.6" height="18.4" rx="3.8" fill="#5C0000" stroke="#861400" stroke-width="1"/>
<rect x="819.10" y="308.24" width="22.6" height="17.4" rx="3.8" fill="#C0BC2C"/>
<rect x="821.10" y="307.74" width="18.6" height="18.4" rx="3.8" fill="#5C0000" stroke="#861400" stroke-width="1"/>
<rect x="855.10" y="307.84" width="22.6" height="17.4" rx="3.8" fill="#C0BC2C"/>
<rect x="857.10" y="307.34" width="18.6" height="18.4" rx="3.8" fill="#5C0000" stroke="#861400" stroke-width="1"/>
<rect x="890.30" y="307.46" width="22.6" height="17.4" rx="3.8" fill="#C0BC2C"/>
<rect x="892.30" y="306.96" width="18.6" height="18.4" rx="3.8" fill="#5C0000" stroke="#861400" stroke-width="1"/>
<rect x="925.80" y="307.07" width="22.6" height="17.4" rx="3.8" fill="#C0BC2C"/>
<rect x="927.80" y="306.57" width="18.6" height="18.4" rx="3.8" fill="#5C0000" stroke="#861400" stroke-width="1"/>
<rect x="961.70" y="306.67" width="22.6" height="17.4" rx="3.8" fill="#C0BC2C"/>
<rect x="963.70" y="306.17" width="18.6" height="18.4" rx="3.8" fill="#5C0000" stroke="#861400" stroke-width="1"/>
<rect x="996.70" y="306.29" width="22.6" height="17.4" rx="3.8" fill="#C0BC2C"/>
<rect x="998.70" y="305.79" width="18.6" height="18.4" rx="3.8" fill="#5C0000" stroke="#861400" stroke-width="1"/>
<rect x="1032.10" y="305.90" width="22.6" height="17.4" rx="3.8" fill="#C0BC2C"/>
<rect x="1034.10" y="305.40" width="18.6" height="18.4" rx="3.8" fill="#5C0000" stroke="#861400" stroke-width="1"/>
<polygon points="597,339.98 1032,335.63 1032,338.63 597,342.98" fill="#8E5000" />
<polygon points="597,341.18 1032,336.83 1032,338.63 597,342.98" fill="#844400" />
<polygon points="597,342.68 1032,338.33 1032,358.73 597,363.08" fill="#C2BC30" />
<polygon points="597,344.98 1032,340.63 1032,356.43 597,360.78" fill="url(#lg)" />
<rect x="584.07" y="344.20" width="22.6" height="17.4" rx="3.8" fill="#C0BC2C"/>
<rect x="586.07" y="343.70" width="18.6" height="18.4" rx="3.8" fill="#5C0000" stroke="#861400" stroke-width="1"/>
<rect x="616.57" y="343.87" width="22.6" height="17.4" rx="3.8" fill="#C0BC2C"/>
<rect x="618.57" y="343.37" width="18.6" height="18.4" rx="3.8" fill="#5C0000" stroke="#861400" stroke-width="1"/>
<rect x="650.27" y="343.53" width="22.6" height="17.4" rx="3.8" fill="#C0BC2C"/>
<rect x="652.27" y="343.03" width="18.6" height="18.4" rx="3.8" fill="#5C0000" stroke="#861400" stroke-width="1"/>
<rect x="683.57" y="343.20" width="22.6" height="17.4" rx="3.8" fill="#C0BC2C"/>
<rect x="685.57" y="342.70" width="18.6" height="18.4" rx="3.8" fill="#5C0000" stroke="#861400" stroke-width="1"/>
<rect x="716.97" y="342.87" width="22.6" height="17.4" rx="3.8" fill="#C0BC2C"/>
<rect x="718.97" y="342.37" width="18.6" height="18.4" rx="3.8" fill="#5C0000" stroke="#861400" stroke-width="1"/>
<rect x="750.67" y="342.53" width="22.6" height="17.4" rx="3.8" fill="#C0BC2C"/>
<rect x="752.67" y="342.03" width="18.6" height="18.4" rx="3.8" fill="#5C0000" stroke="#861400" stroke-width="1"/>
<rect x="784.87" y="342.19" width="22.6" height="17.4" rx="3.8" fill="#C0BC2C"/>
<rect x="786.87" y="341.69" width="18.6" height="18.4" rx="3.8" fill="#5C0000" stroke="#861400" stroke-width="1"/>
<rect x="819.57" y="341.84" width="22.6" height="17.4" rx="3.8" fill="#C0BC2C"/>
<rect x="821.57" y="341.34" width="18.6" height="18.4" rx="3.8" fill="#5C0000" stroke="#861400" stroke-width="1"/>
<rect x="855.57" y="341.48" width="22.6" height="17.4" rx="3.8" fill="#C0BC2C"/>
<rect x="857.57" y="340.98" width="18.6" height="18.4" rx="3.8" fill="#5C0000" stroke="#861400" stroke-width="1"/>
<rect x="890.77" y="341.13" width="22.6" height="17.4" rx="3.8" fill="#C0BC2C"/>
<rect x="892.77" y="340.63" width="18.6" height="18.4" rx="3.8" fill="#5C0000" stroke="#861400" stroke-width="1"/>
<rect x="926.27" y="340.77" width="22.6" height="17.4" rx="3.8" fill="#C0BC2C"/>
<rect x="928.27" y="340.27" width="18.6" height="18.4" rx="3.8" fill="#5C0000" stroke="#861400" stroke-width="1"/>
<rect x="962.17" y="340.42" width="22.6" height="17.4" rx="3.8" fill="#C0BC2C"/>
<rect x="964.17" y="339.92" width="18.6" height="18.4" rx="3.8" fill="#5C0000" stroke="#861400" stroke-width="1"/>
<rect x="997.17" y="340.07" width="22.6" height="17.4" rx="3.8" fill="#C0BC2C"/>
<rect x="999.17" y="339.57" width="18.6" height="18.4" rx="3.8" fill="#5C0000" stroke="#861400" stroke-width="1"/>
<rect x="1032.57" y="339.71" width="22.6" height="17.4" rx="3.8" fill="#C0BC2C"/>
<rect x="1034.57" y="339.21" width="18.6" height="18.4" rx="3.8" fill="#5C0000" stroke="#861400" stroke-width="1"/>
<polygon points="597,373.38 1032,369.03 1032,372.03 597,376.38" fill="#8E5000" />
<polygon points="597,374.58 1032,370.23 1032,372.03 597,376.38" fill="#844400" />
<polygon points="597,376.08 1032,371.73 1032,392.13 597,396.48" fill="#C2BC30" />
<polygon points="597,378.38 1032,374.03 1032,389.83 597,394.18" fill="url(#lg)" />
<rect x="584.54" y="377.59" width="22.6" height="17.4" rx="3.8" fill="#C0BC2C"/>
<rect x="586.54" y="377.09" width="18.6" height="18.4" rx="3.8" fill="#5C0000" stroke="#861400" stroke-width="1"/>
<rect x="617.04" y="377.27" width="22.6" height="17.4" rx="3.8" fill="#C0BC2C"/>
<rect x="619.04" y="376.77" width="18.6" height="18.4" rx="3.8" fill="#5C0000" stroke="#861400" stroke-width="1"/>
<rect x="650.74" y="376.93" width="22.6" height="17.4" rx="3.8" fill="#C0BC2C"/>
<rect x="652.74" y="376.43" width="18.6" height="18.4" rx="3.8" fill="#5C0000" stroke="#861400" stroke-width="1"/>
<rect x="684.04" y="376.60" width="22.6" height="17.4" rx="3.8" fill="#C0BC2C"/>
<rect x="686.04" y="376.10" width="18.6" height="18.4" rx="3.8" fill="#5C0000" stroke="#861400" stroke-width="1"/>
<rect x="717.44" y="376.26" width="22.6" height="17.4" rx="3.8" fill="#C0BC2C"/>
<rect x="719.44" y="375.76" width="18.6" height="18.4" rx="3.8" fill="#5C0000" stroke="#861400" stroke-width="1"/>
<rect x="751.14" y="375.93" width="22.6" height="17.4" rx="3.8" fill="#C0BC2C"/>
<rect x="753.14" y="375.43" width="18.6" height="18.4" rx="3.8" fill="#5C0000" stroke="#861400" stroke-width="1"/>
<rect x="785.34" y="375.58" width="22.6" height="17.4" rx="3.8" fill="#C0BC2C"/>
<rect x="787.34" y="375.08" width="18.6" height="18.4" rx="3.8" fill="#5C0000" stroke="#861400" stroke-width="1"/>
<rect x="820.04" y="375.24" width="22.6" height="17.4" rx="3.8" fill="#C0BC2C"/>
<rect x="822.04" y="374.74" width="18.6" height="18.4" rx="3.8" fill="#5C0000" stroke="#861400" stroke-width="1"/>
<rect x="856.04" y="374.88" width="22.6" height="17.4" rx="3.8" fill="#C0BC2C"/>
<rect x="858.04" y="374.38" width="18.6" height="18.4" rx="3.8" fill="#5C0000" stroke="#861400" stroke-width="1"/>
<rect x="891.24" y="374.52" width="22.6" height="17.4" rx="3.8" fill="#C0BC2C"/>
<rect x="893.24" y="374.02" width="18.6" height="18.4" rx="3.8" fill="#5C0000" stroke="#861400" stroke-width="1"/>
<rect x="926.74" y="374.17" width="22.6" height="17.4" rx="3.8" fill="#C0BC2C"/>
<rect x="928.74" y="373.67" width="18.6" height="18.4" rx="3.8" fill="#5C0000" stroke="#861400" stroke-width="1"/>
<rect x="962.64" y="373.81" width="22.6" height="17.4" rx="3.8" fill="#C0BC2C"/>
<rect x="964.64" y="373.31" width="18.6" height="18.4" rx="3.8" fill="#5C0000" stroke="#861400" stroke-width="1"/>
<rect x="997.64" y="373.46" width="22.6" height="17.4" rx="3.8" fill="#C0BC2C"/>
<rect x="999.64" y="372.96" width="18.6" height="18.4" rx="3.8" fill="#5C0000" stroke="#861400" stroke-width="1"/>
<rect x="1033.04" y="373.11" width="22.6" height="17.4" rx="3.8" fill="#C0BC2C"/>
<rect x="1035.04" y="372.61" width="18.6" height="18.4" rx="3.8" fill="#5C0000" stroke="#861400" stroke-width="1"/>
<polygon points="597,406.41 1032,401.62 1032,404.62 597,409.41" fill="#8E5000" />
<polygon points="597,407.61 1032,402.82 1032,404.62 597,409.41" fill="#844400" />
<polygon points="597,409.11 1032,404.32 1032,424.72 597,429.51" fill="#C2BC30" />
<polygon points="597,411.41 1032,406.62 1032,422.42 597,427.21" fill="url(#lg)" />
<rect x="585.00" y="410.62" width="22.6" height="17.4" rx="3.8" fill="#C0BC2C"/>
<rect x="587.00" y="410.12" width="18.6" height="18.4" rx="3.8" fill="#5C0000" stroke="#861400" stroke-width="1"/>
<rect x="617.50" y="410.26" width="22.6" height="17.4" rx="3.8" fill="#C0BC2C"/>
<rect x="619.50" y="409.76" width="18.6" height="18.4" rx="3.8" fill="#5C0000" stroke="#861400" stroke-width="1"/>
<rect x="651.20" y="409.89" width="22.6" height="17.4" rx="3.8" fill="#C0BC2C"/>
<rect x="653.20" y="409.39" width="18.6" height="18.4" rx="3.8" fill="#5C0000" stroke="#861400" stroke-width="1"/>
<rect x="684.50" y="409.52" width="22.6" height="17.4" rx="3.8" fill="#C0BC2C"/>
<rect x="686.50" y="409.02" width="18.6" height="18.4" rx="3.8" fill="#5C0000" stroke="#861400" stroke-width="1"/>
<rect x="717.90" y="409.15" width="22.6" height="17.4" rx="3.8" fill="#C0BC2C"/>
<rect x="719.90" y="408.65" width="18.6" height="18.4" rx="3.8" fill="#5C0000" stroke="#861400" stroke-width="1"/>
<rect x="751.60" y="408.78" width="22.6" height="17.4" rx="3.8" fill="#C0BC2C"/>
<rect x="753.60" y="408.28" width="18.6" height="18.4" rx="3.8" fill="#5C0000" stroke="#861400" stroke-width="1"/>
<rect x="785.80" y="408.41" width="22.6" height="17.4" rx="3.8" fill="#C0BC2C"/>
<rect x="787.80" y="407.91" width="18.6" height="18.4" rx="3.8" fill="#5C0000" stroke="#861400" stroke-width="1"/>
<rect x="820.50" y="408.03" width="22.6" height="17.4" rx="3.8" fill="#C0BC2C"/>
<rect x="822.50" y="407.53" width="18.6" height="18.4" rx="3.8" fill="#5C0000" stroke="#861400" stroke-width="1"/>
<rect x="856.50" y="407.63" width="22.6" height="17.4" rx="3.8" fill="#C0BC2C"/>
<rect x="858.50" y="407.13" width="18.6" height="18.4" rx="3.8" fill="#5C0000" stroke="#861400" stroke-width="1"/>
<rect x="891.70" y="407.24" width="22.6" height="17.4" rx="3.8" fill="#C0BC2C"/>
<rect x="893.70" y="406.74" width="18.6" height="18.4" rx="3.8" fill="#5C0000" stroke="#861400" stroke-width="1"/>
<rect x="927.20" y="406.85" width="22.6" height="17.4" rx="3.8" fill="#C0BC2C"/>
<rect x="929.20" y="406.35" width="18.6" height="18.4" rx="3.8" fill="#5C0000" stroke="#861400" stroke-width="1"/>
<rect x="963.10" y="406.46" width="22.6" height="17.4" rx="3.8" fill="#C0BC2C"/>
<rect x="965.10" y="405.96" width="18.6" height="18.4" rx="3.8" fill="#5C0000" stroke="#861400" stroke-width="1"/>
<rect x="998.10" y="406.07" width="22.6" height="17.4" rx="3.8" fill="#C0BC2C"/>
<rect x="1000.10" y="405.57" width="18.6" height="18.4" rx="3.8" fill="#5C0000" stroke="#861400" stroke-width="1"/>
<rect x="1033.50" y="405.68" width="22.6" height="17.4" rx="3.8" fill="#C0BC2C"/>
<rect x="1035.50" y="405.18" width="18.6" height="18.4" rx="3.8" fill="#5C0000" stroke="#861400" stroke-width="1"/>
<polygon points="597,438.95 1032,435.04 1032,438.04 597,441.95" fill="#8E5000" />
<polygon points="597,440.15 1032,436.24 1032,438.04 597,441.95" fill="#844400" />
<polygon points="597,441.65 1032,437.74 1032,458.14 597,462.05" fill="#C2BC30" />
<polygon points="597,443.95 1032,440.04 1032,455.84 597,459.75" fill="url(#lg)" />
<rect x="585.46" y="443.15" width="22.6" height="17.4" rx="3.8" fill="#C0BC2C"/>
<rect x="587.46" y="442.65" width="18.6" height="18.4" rx="3.8" fill="#5C0000" stroke="#861400" stroke-width="1"/>
<rect x="617.96" y="442.86" width="22.6" height="17.4" rx="3.8" fill="#C0BC2C"/>
<rect x="619.96" y="442.36" width="18.6" height="18.4" rx="3.8" fill="#5C0000" stroke="#861400" stroke-width="1"/>
<rect x="651.66" y="442.56" width="22.6" height="17.4" rx="3.8" fill="#C0BC2C"/>
<rect x="653.66" y="442.06" width="18.6" height="18.4" rx="3.8" fill="#5C0000" stroke="#861400" stroke-width="1"/>
<rect x="684.96" y="442.26" width="22.6" height="17.4" rx="3.8" fill="#C0BC2C"/>
<rect x="686.96" y="441.76" width="18.6" height="18.4" rx="3.8" fill="#5C0000" stroke="#861400" stroke-width="1"/>
<rect x="718.36" y="441.96" width="22.6" height="17.4" rx="3.8" fill="#C0BC2C"/>
<rect x="720.36" y="441.46" width="18.6" height="18.4" rx="3.8" fill="#5C0000" stroke="#861400" stroke-width="1"/>
<rect x="752.06" y="441.65" width="22.6" height="17.4" rx="3.8" fill="#C0BC2C"/>
<rect x="754.06" y="441.15" width="18.6" height="18.4" rx="3.8" fill="#5C0000" stroke="#861400" stroke-width="1"/>
<rect x="786.26" y="441.35" width="22.6" height="17.4" rx="3.8" fill="#C0BC2C"/>
<rect x="788.26" y="440.85" width="18.6" height="18.4" rx="3.8" fill="#5C0000" stroke="#861400" stroke-width="1"/>
<rect x="820.96" y="441.03" width="22.6" height="17.4" rx="3.8" fill="#C0BC2C"/>
<rect x="822.96" y="440.53" width="18.6" height="18.4" rx="3.8" fill="#5C0000" stroke="#861400" stroke-width="1"/>
<rect x="856.96" y="440.71" width="22.6" height="17.4" rx="3.8" fill="#C0BC2C"/>
<rect x="858.96" y="440.21" width="18.6" height="18.4" rx="3.8" fill="#5C0000" stroke="#861400" stroke-width="1"/>
<rect x="892.16" y="440.39" width="22.6" height="17.4" rx="3.8" fill="#C0BC2C"/>
<rect x="894.16" y="439.89" width="18.6" height="18.4" rx="3.8" fill="#5C0000" stroke="#861400" stroke-width="1"/>
<rect x="927.66" y="440.07" width="22.6" height="17.4" rx="3.8" fill="#C0BC2C"/>
<rect x="929.66" y="439.57" width="18.6" height="18.4" rx="3.8" fill="#5C0000" stroke="#861400" stroke-width="1"/>
<rect x="963.56" y="439.75" width="22.6" height="17.4" rx="3.8" fill="#C0BC2C"/>
<rect x="965.56" y="439.25" width="18.6" height="18.4" rx="3.8" fill="#5C0000" stroke="#861400" stroke-width="1"/>
<rect x="998.56" y="439.44" width="22.6" height="17.4" rx="3.8" fill="#C0BC2C"/>
<rect x="1000.56" y="438.94" width="18.6" height="18.4" rx="3.8" fill="#5C0000" stroke="#861400" stroke-width="1"/>
<rect x="1033.96" y="439.12" width="22.6" height="17.4" rx="3.8" fill="#C0BC2C"/>
<rect x="1035.96" y="438.62" width="18.6" height="18.4" rx="3.8" fill="#5C0000" stroke="#861400" stroke-width="1"/>
<linearGradient id="gg" x1="602" x2="1027" y1="0" y2="0" gradientUnits="userSpaceOnUse"><stop offset="0" stop-color="#D0B060"/><stop offset="0.5" stop-color="#C4B030"/><stop offset="0.68" stop-color="#B09018"/><stop offset="0.8" stop-color="#946000"/><stop offset="1" stop-color="#8C5400"/></linearGradient>
<rect x="597" y="257.5" width="435" height="3" fill="url(#gg)"/>
<rect x="619.56" y="257.50" width="14.0" height="2.80" fill="#660000" opacity="1.0"/>
<rect x="653.66" y="257.50" width="13.2" height="2.55" fill="#660000" opacity="1.0"/>
<rect x="687.36" y="257.50" width="12.4" height="2.30" fill="#660000" opacity="1.0"/>
<rect x="721.16" y="257.50" width="11.6" height="2.05" fill="#660000" opacity="1.0"/>
<rect x="755.26" y="257.50" width="10.8" height="1.80" fill="#660000" opacity="1.0"/>
<rect x="789.86" y="257.50" width="10.0" height="1.55" fill="#660000" opacity="0.6"/>
<rect x="824.96" y="257.50" width="9.2" height="1.30" fill="#660000" opacity="0.6"/>
<rect x="840" y="46" width="200" height="2" fill="#8A3000" opacity="0.7"/>
</g></svg>
<svg class="abs" style="left:596px;top:254px" width="6" height="8" viewBox="596 254 6 8" shape-rendering="crispEdges" fill="#0000FF"><rect x="597" y="255" width="1" height="1"/><rect x="597" y="256" width="1" height="1"/><rect x="598" y="256" width="1" height="1"/><rect x="597" y="257" width="1" height="1"/><rect x="598" y="257" width="1" height="1"/><rect x="599" y="257" width="1" height="1"/><rect x="597" y="258" width="1" height="1"/><rect x="599" y="258" width="1" height="1"/><rect x="597" y="259" width="1" height="1"/><rect x="599" y="259" width="1" height="1"/><rect x="600" y="259" width="1" height="1"/><rect x="597" y="260" width="1" height="1"/><rect x="598" y="260" width="1" height="1"/><rect x="599" y="260" width="1" height="1"/><rect x="600" y="260" width="1" height="1"/></svg>
<div id="cbar" class="abs" style="left:1032px;top:47px;width:20px;height:441px;border:1px solid #000;background:linear-gradient(#E0A8A8,#D8A890 8%,#C8A070 20%,#B8A040 28%,#A8A000 35%,#906000 48%,#700000 60%,#500000 78%,#400000)"></div>
<div class="sc" style="left:1017px;top:28px">1.0 m</div>
<div class="abs" style="left:602px;top:480px;width:425px;height:8px;border:1px solid #000;border-bottom:none"></div>
<div class="sc" style="left:602px;top:488px">0.0</div>
<div class="sc" style="left:975px;top:488px">12.5 µm</div>

</body></html>
